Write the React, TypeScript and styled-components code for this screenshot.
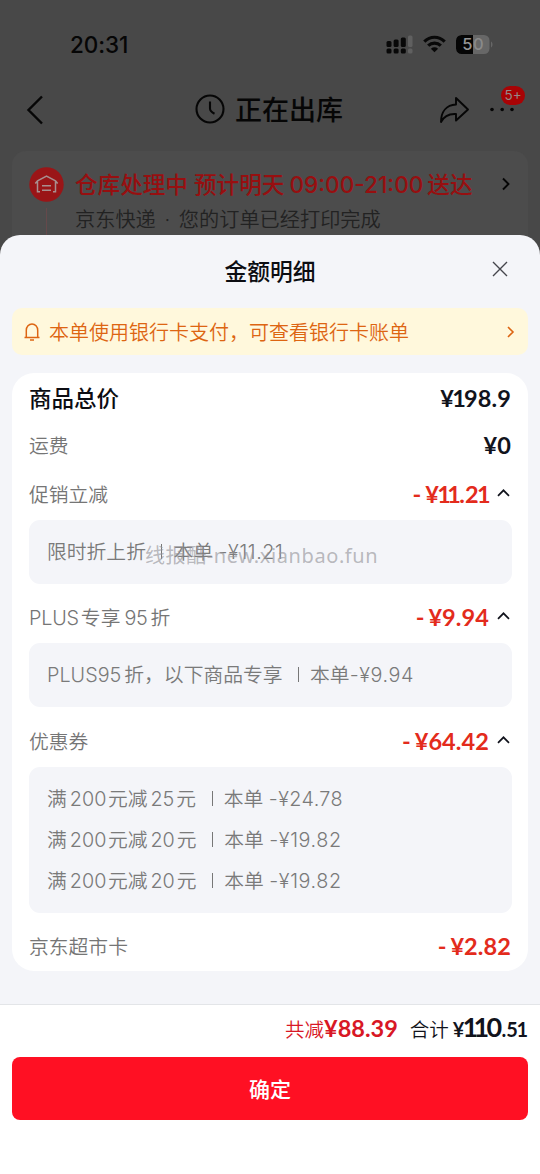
import React from 'react';
import styled, { createGlobalStyle } from 'styled-components';

const cjk = '"Noto Sans CJK SC", sans-serif';

const Global = createGlobalStyle`
  * { box-sizing: border-box; }
  body { margin: 0; background: #fff; font-family: Inter, ${cjk}; }
`;

const Screen = styled.div`
  width: 540px;
  height: 1174px;
  display: flex;
  flex-direction: column;
  overflow: hidden;
  background: #484848;
`;

const Behind = styled.div`
  height: 255px;
  flex: none;
  overflow: hidden;
  display: flex;
  flex-direction: column;
  color: #060606;
`;

const StatusBar = styled.div`
  height: 88px;
  flex: none;
  padding: 0 47px 0 70px;
  display: flex;
  align-items: center;
  justify-content: space-between;
`;

const Clock = styled.span`
  font-size: 22.5px;
  font-weight: 550;
  letter-spacing: -0.1px;
`;

const StatusIcons = styled.div`
  display: flex;
  align-items: center;
  gap: 10px;
`;

const NavBar = styled.div`
  height: 43px;
  flex: none;
  padding: 0 26px 0 25px;
  display: grid;
  grid-template-columns: 80px 1fr 76px;
  align-items: center;
  svg { display: block; }
`;

const NavTitle = styled.div`
  display: flex;
  align-items: center;
  justify-content: center;
  gap: 10px;
  padding: 0 5px 2px 0;
  font: 500 27px/40px ${cjk};
`;

const NavActions = styled.div`
  position: relative;
  display: flex;
  align-items: center;
  justify-content: flex-end;
  gap: 20px;
  margin-left: -10px;
`;

const Badge = styled.span`
  position: absolute;
  right: -11px;
  top: -10px;
  width: 24px;
  height: 19px;
  border-radius: 10px;
  background: #a80305;
  color: #958989;
  font: 400 13.5px/19px Inter, sans-serif;
  text-align: center;
`;

const OrderCard = styled.div`
  margin: 20px 12px 0;
  height: 130px;
  flex: none;
  border-radius: 14px;
  background: #4c4c4c;
  padding: 16px 16px 0 17px;
  display: flex;
`;

const Track = styled.div`
  width: 35px;
  display: flex;
  flex-direction: column;
  gap: 6px;
  svg { display: block; }
`;

const TrackLine = styled.div`
  width: 1px;
  height: 50px;
  margin-left: 17px;
  background: #65494b;
`;

const OrderText = styled.div`
  flex: 1;
  padding-left: 11px;
  white-space: nowrap;
`;

const OrderState = styled.div`
  display: flex;
  align-items: center;
  justify-content: space-between;
  height: 34px;
  padding-bottom: 1px;
  color: #970f10;
  font-size: 22.6px;
  font-weight: 450;
`;

const OrderNote = styled.div`
  color: #222;
  font: 350 20.2px/38px Inter, ${cjk};
`;

const Num = styled.span<{ $l?: number; $r?: number; $ls?: number }>`
  margin-left: ${p => p.$l ?? 0}px;
  margin-right: ${p => p.$r ?? 0}px;
  letter-spacing: ${p => p.$ls ?? 0}px;
`;

const Sheet = styled.div`
  position: relative;
  margin-top: -20px;
  flex: 1;
  border-radius: 20px 20px 0 0;
  background: #f4f5f9;
  display: flex;
  flex-direction: column;
`;

const SheetHead = styled.div`
  height: 73px;
  flex: none;
  padding-bottom: 1px;
  display: grid;
  grid-template-columns: 60px 1fr 60px;
  align-items: center;
  text-align: center;
  color: #0c0d12;
  font: 500 22.8px/30px ${cjk};
  svg { display: block; margin: -4px 0 0 12px; }
`;

const Notice = styled.div`
  height: 47px;
  flex: none;
  margin: 0 12px 18px;
  padding: 0 12px;
  border-radius: 10px;
  background: #fff8dc;
  color: #dd6512;
  display: flex;
  align-items: center;
  gap: 8px;
  span { flex: 1; font: 350 20px/30px ${cjk}; }
`;

const Details = styled.div`
  position: relative;
  margin: 0 12px;
  height: 598px;
  flex: none;
  padding: 1px 16px 0 17px;
  border-radius: 22px;
  background: #fff;
`;

const Row = styled.div<{ $h: number }>`
  height: ${p => p.$h}px;
  display: flex;
  align-items: center;
  justify-content: space-between;
`;

const Label = styled.span<{ $strong?: boolean }>`
  white-space: nowrap;
  padding-bottom: 2px;
  font-family: Inter, ${cjk};
  font-size: ${p => (p.$strong ? 22.5 : 19.8)}px;
  font-weight: ${p => (p.$strong ? 500 : 350)};
  color: ${p => (p.$strong ? '#0c0d12' : '#757575')};
`;

const Amount = styled.span<{ $cut?: boolean }>`
  display: flex;
  align-items: center;
  gap: 8px;
  padding: 0 1px 1px 0;
  font: 700 23.5px/30px Lato, sans-serif;
  letter-spacing: 0.1px;
  word-spacing: -2px;
  white-space: nowrap;
  color: ${p => (p.$cut ? '#e32b1c' : '#11131c')};
`;

const One = styled.span`
  margin: 0 -0.075em;
`;

const Box = styled.div`
  margin: 0 0 8px;
  padding: 12px 18px 11px;
  border-radius: 11px;
  background: #f4f5f9;
`;

const Line = styled.div`
  height: 41px;
  line-height: 41px;
  white-space: nowrap;
  font-size: 19.8px;
  font-weight: 350;
  color: #7a7a7a;
`;

const Bar = styled.i`
  display: inline-block;
  width: 1px;
  height: 15px;
  margin: 0 11px 0 15.5px;
  background: #777;
`;

const Watermark = styled.div`
  position: absolute;
  left: 133px;
  top: 168px;
  white-space: nowrap;
  font: 400 20px/30px "Noto Sans", ${cjk};
  letter-spacing: 0.6px;
  color: rgba(150, 150, 155, 0.65);
`;

const Footer = styled.div`
  margin-top: auto;
  height: 170px;
  flex: none;
  padding: 0 12px;
  border-top: 1px solid #e3e5e8;
  background: #fff;
`;

const Totals = styled.div`
  height: 52px;
  padding-bottom: 6px;
  display: flex;
  justify-content: flex-end;
  align-items: center;
  gap: 12px;
`;

const Total = styled.div<{ $red?: boolean }>`
  display: flex;
  align-items: baseline;
  color: ${p => (p.$red ? '#d81725' : '#11131c')};
  font: 350 19.5px/30px ${cjk};
`;

const Money = styled.b<{ $size: number; $ls?: number; $ml?: number }>`
  margin-left: ${p => p.$ml ?? 0}px;
  font: 700 ${p => p.$size}px/30px Lato, sans-serif;
  letter-spacing: ${p => p.$ls ?? 0}px;
`;

const Confirm = styled.button`
  display: block;
  width: 100%;
  height: 63px;
  padding: 0 0 2px;
  border: 0;
  border-radius: 8px;
  background: #ff1023;
  color: #fff;
  font: 500 21px/30px ${cjk};
`;

const Signal = () => (
  <svg width="27" height="19" viewBox="0 0 27 19" fill="#080808">
    <rect x="0.5" y="6" width="5" height="6" rx="1.5" /><rect x="7.6" y="4.5" width="5" height="7.5" rx="1.5" />
    <rect x="14.8" y="2.5" width="5" height="9.5" rx="1.5" /><rect x="22" y="0.5" width="4.5" height="11.5" rx="1.5" fill="#606060" />
    <rect x="0.5" y="13.5" width="5" height="5" rx="1.5" /><rect x="7.6" y="13.5" width="5" height="5" rx="1.5" />
    <rect x="14.8" y="13.5" width="5" height="5" rx="1.5" /><rect x="22" y="13.5" width="4.5" height="5" rx="1.5" fill="#606060" />
  </svg>
);

const Wifi = () => (
  <svg width="23" height="18" viewBox="0 0 23 18" fill="none" stroke="#080808" strokeWidth="3.2">
    <path d="M1.3 6.6C7.2.8 15.8.8 21.7 6.6M5.2 10.7C8.8 7.2 14.2 7.2 17.8 10.7" />
    <path d="M11.5 17.3 7.9 13.7C10 11.9 13 11.9 15.1 13.7Z" fill="#080808" stroke="none" />
  </svg>
);

const Battery = () => (
  <svg width="37" height="19" viewBox="0 0 37 19">
    <rect width="33.5" height="19" rx="5.5" fill="#676767" />
    <path d="M5.5 0H17V19H5.5A5.5 5.5 0 0 1 0 13.5V5.5A5.5 5.5 0 0 1 5.5 0Z" fill="#050505" />
    <path d="M35 6.5C37 7.5 37 11.5 35 12.5Z" fill="#676767" />
    <text x="6.3" y="15.4" fontFamily="Inter" fontWeight="500" fontSize="16.5" fill="#959595">5</text>
    <text x="17" y="15.4" fontFamily="Inter" fontWeight="500" fontSize="16.5" fill="#8a8a8a">0</text>
  </svg>
);

const Warehouse = () => (
  <svg width="35" height="35" viewBox="0 0 35 35">
    <circle cx="17.5" cy="17.5" r="17.2" fill="#9a1517" />
    <path d="M8.5 25.5V14.500M26.500 25.500V14.500M6.300 16.500 8.500 13.900 17.500 9 26.500 13.900 28.700 16.500M8.500 24.700H11M24 24.700H26.500M13 18.700H22M13 23.200H22" fill="none" stroke="#a98f8f" strokeWidth="1.5" />
  </svg>
);

const Up = () => (
  <svg width="14" height="10" viewBox="0 0 14 10" fill="none" stroke="#11131c" strokeWidth="1.7">
    <path d="M1 6.8 6.500 1.300 12 6.800" />
  </svg>
);

// Lato's figures are all one width; the digit 1 is set tighter.
function Figures({ text }: { text: string }) {
  return <>{[...text].map((c, i) => (c === '1' ? <One key={i}>1</One> : c))}</>;
}

function Discount({ value, open }: { value: string; open?: boolean }) {
  return (
    <Amount $cut>
      <span>- ¥<Figures text={value} /></span>
      {open && <Up />}
    </Amount>
  );
}

const coupons = [
  { off: '25', value: '24.78', spacing: 0.4 },
  { off: '20', value: '19.82', spacing: 0.6 },
  { off: '20', value: '19.82', spacing: 0.6 },
];

export default function App() {
  return (
    <Screen>
      <Global />
      <Behind>
        <StatusBar>
          <Clock>20:31</Clock>
          <StatusIcons><Signal /><Wifi /><Battery /></StatusIcons>
        </StatusBar>
        <NavBar>
          <svg width="20" height="30" viewBox="0 0 20 30" fill="none" stroke="#060606" strokeWidth="2.4"><path d="M17 1.5 3.500 15 17 28.500" /></svg>
          <NavTitle>
            <svg width="30" height="30" viewBox="0 0 30 30" fill="none" stroke="#060606" strokeWidth="2.1"><circle cx="15" cy="15" r="13.5" /><path d="M15 7.5V14.500C15 16.500 17 18.500 19.500 19.800" /></svg>
            正在出库
          </NavTitle>
          <NavActions>
            <svg width="31" height="28" viewBox="0 0 31 28" fill="none" stroke="#060606" strokeWidth="1.9" strokeLinejoin="round"><path d="M17 2 29 13.500 17 24.500V18C9.500 17.500 5 20 2 26 2 15.500 7.500 9 17 8.500Z" /></svg>
            <svg width="24" height="5" viewBox="0 0 24 5" fill="#060606"><circle cx="2" cy="2.5" r="1.8" /><circle cx="12.2" cy="2.5" r="1.8" /><circle cx="22" cy="2.5" r="1.8" /></svg>
            <Badge>5+</Badge>
          </NavActions>
        </NavBar>
        <OrderCard>
          <Track><Warehouse /><TrackLine /></Track>
          <OrderText>
            <OrderState>
              <span>仓库处理中 预计明天<Num $l={5} $r={4}>09:00-21:00</Num>送达</span>
              <svg width="10" height="14" viewBox="0 0 10 14" fill="none" stroke="#060606" strokeWidth="1.9"><path d="M1 1.5 6.500 7 1 12.500" /></svg>
            </OrderState>
            <OrderNote>京东快递<Num $l={3} $r={3}> · </Num>您的订单已经打印完成</OrderNote>
          </OrderText>
        </OrderCard>
      </Behind>
      <Sheet>
        <SheetHead>
          <i />
          <span>金额明细</span>
          <svg width="16" height="16" viewBox="0 0 16 16" stroke="#44464c" strokeWidth="1.4"><path d="M1 1 15 15M15 1 1 15" /></svg>
        </SheetHead>
        <Notice>
          <svg width="17" height="20" viewBox="0 0 17 20" fill="none" stroke="#dd6512" strokeWidth="1.5"><path d="M.5 15.5H15.500M2.300 15.500V8.300A5.700 6.300 0 0 1 13.700 8.300V15.500M6 18H10" /></svg>
          <span>本单使用银行卡支付，可查看银行卡账单</span>
          <svg width="10" height="14" viewBox="0 0 10 14" fill="none" stroke="#dd6512" strokeWidth="1.6"><path d="M2 2 7 7 2 12" /></svg>
        </Notice>
        <Details>
          <Row $h={48}><Label $strong>商品总价</Label><Amount><span>¥<Figures text="198.9" /></span></Amount></Row>
          <Row $h={46}><Label>运费</Label><Amount>¥0</Amount></Row>
          <Row $h={52}><Label>促销立减</Label><Discount value="11.21" open /></Row>
          <Box><Line>限时折上折<Bar />本单 <Num $ls={0.6}>-¥11.21</Num></Line></Box>
          <Row $h={51}><Label><Num $ls={-0.2}>PLUS</Num><Num $l={2} />专享<Num $l={4} $r={3} $ls={-0.3}>95</Num>折</Label><Discount value="9.94" open /></Row>
          <Box><Line>PLUS95<Num $l={3} />折，以下商品专享<Bar />本单<Num $ls={0.6}>-¥9.94</Num></Line></Box>
          <Row $h={52}><Label>优惠券</Label><Discount value="64.42" open /></Row>
          <Box>
            {coupons.map((c, i) => (
              <Line key={i}>满<Num $l={3} $r={1.5}>200</Num>元减<Num $l={3} $r={2}>{c.off}</Num>元<Bar />本单 <Num $ls={c.spacing}>-¥{c.value}</Num></Line>
            ))}
          </Box>
          <Row $h={50}><Label>京东超市卡</Label><Discount value="2.82" /></Row>
          <Watermark>线报酷-new.xianbao.fun</Watermark>
        </Details>
        <Footer>
          <Totals>
            <Total $red>共减<Money $size={23.5}>¥88.39</Money></Total>
            <Total>合计<Money $size={20} $ml={4}>¥</Money><Money $size={27} $ls={-0.6}><Figures text="110" /></Money><Money $size={20}>.5<One>1</One></Money><Num $r={1.5} /></Total>
          </Totals>
          <Confirm>确定</Confirm>
        </Footer>
      </Sheet>
    </Screen>
  );
}
